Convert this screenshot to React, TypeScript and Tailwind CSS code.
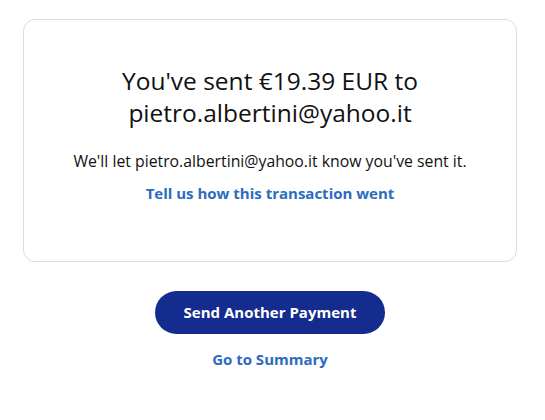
import React from 'react';

export default function App() {
  return (
    <div
      className="w-[545px] h-[420px] bg-white pt-[19px]"
      style={{ fontFamily: '"Open Sans", Arial, sans-serif' }}
    >
      {/* Confirmation card */}
      <div className="ml-[23px] w-[494px] h-[243px] rounded-[12px] border border-[#dcdcdc] flex flex-col items-center pt-[45px]">
        <h1 className="text-[24.5px] leading-[32px] text-[#111111] text-center font-normal">
          You've sent €19.39 EUR to
          <br />
          pietro.albertini@yahoo.it
        </h1>
        <p className="mt-[22px] text-[15.8px] leading-[20px] text-[#111111]">
          We'll let pietro.albertini@yahoo.it know you've sent it.
        </p>
        <a className="mt-[12px] text-[15px] leading-[20px] font-bold text-[#2b6bc0]">
          Tell us how this transaction went
        </a>
      </div>

      {/* Actions */}
      <div className="flex flex-col items-center mt-[29px] pr-[5px]">
        <button className="w-[230px] h-[43px] rounded-full bg-[#142c8e] text-white text-[15px] font-bold">
          Send Another Payment
        </button>
        <a className="mt-[15px] text-[15px] leading-[20px] font-bold text-[#2b6bc0]">
          Go to Summary
        </a>
      </div>
    </div>
  );
}
